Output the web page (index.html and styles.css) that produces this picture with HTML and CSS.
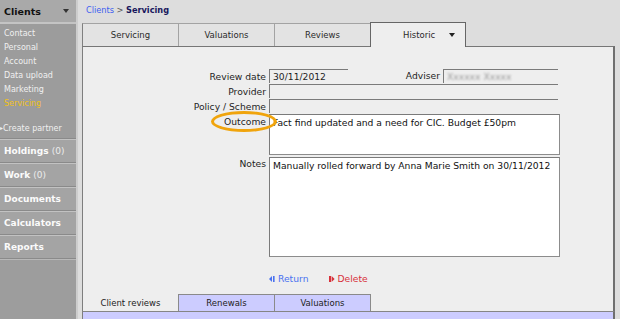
FILE: index.html
```html
<!DOCTYPE html>
<html lang="en">
<head>
    <meta charset="UTF-8">
    <title>Servicing - Historic</title>
    <link rel="stylesheet" href="styles.css">
</head>
<body>
    <div class="app">
        <aside class="sidebar">
            <div class="side-head">
                <span>Clients</span>
                <span class="caret"></span>
            </div>
            <ul class="side-sub">
                <li>Contact</li>
                <li>Personal</li>
                <li>Account</li>
                <li>Data upload</li>
                <li>Marketing</li>
                <li class="current">Servicing</li>
                <li class="side-action"><span class="bullet">&#9656;</span>Create partner</li>
            </ul>
            <div class="side-item">Holdings <span class="count">(0)</span></div>
            <div class="side-item">Work <span class="count">(0)</span></div>
            <div class="side-item">Documents</div>
            <div class="side-item">Calculators</div>
            <div class="side-item">Reports</div>
            <div class="side-rest"></div>
        </aside>

        <main class="content">
            <div class="crumbs">
                <a href="#" class="crumb-link">Clients</a> &gt; <b class="crumb-here">Servicing</b>
            </div>

            <div class="tabs">
                <div class="tab">Servicing</div>
                <div class="tab">Valuations</div>
                <div class="tab">Reviews</div>
                <div class="tab active">Historic <span class="caret dark"></span></div>
            </div>

            <section class="panel">
                <div class="form">
                    <div class="row">
                        <div class="label">Review date</div>
                        <div class="field-group">
                            <div class="field date">30/11/2012</div>
                            <div class="label inline">Adviser</div>
                            <div class="field adviser"><span class="blurred">Xxxxxx Xxxxx</span></div>
                        </div>
                    </div>
                    <div class="row">
                        <div class="label">Provider</div>
                        <div class="field wide"></div>
                    </div>
                    <div class="row">
                        <div class="label">Policy / Scheme</div>
                        <div class="field wide"></div>
                    </div>
                    <div class="row">
                        <div class="label marked">Outcome<span class="ring"></span></div>
                        <textarea class="area short" readonly>Fact find updated and a need for CIC. Budget £50pm</textarea>
                    </div>
                    <div class="row">
                        <div class="label">Notes</div>
                        <textarea class="area tall" readonly>Manually rolled forward by Anna Marie Smith on 30/11/2012</textarea>
                    </div>
                </div>

                <div class="actions">
                    <a href="#" class="action return">
                        <svg width="6" height="8" viewBox="0 0 6 8"><polygon points="0,4 3,1 3,7" fill="currentColor"/><rect x="4" y="1" width="1.6" height="6" fill="currentColor"/></svg>
                        Return
                    </a>
                    <a href="#" class="action delete">
                        <svg width="6" height="8" viewBox="0 0 6 8"><rect x="0" y="1" width="2" height="6" fill="currentColor"/><polygon points="2.6,1 5.6,4 2.6,7" fill="currentColor"/></svg>
                        Delete
                    </a>
                </div>

                <div class="subtabs">
                    <div class="subtab current">Client reviews</div>
                    <div class="subtab">Renewals</div>
                    <div class="subtab">Valuations</div>
                </div>
            </section>
            <div class="strip"></div>
        </main>
    </div>
</body>
</html>
```

FILE: styles.css
```css
/* Base */
html, body {
    margin: 0;
    height: 100%;
}

body {
    font-family: "DejaVu Sans", Verdana, sans-serif;
    font-size: 9px;
    color: #1e1e1e;
    background: #dddddd;
    overflow: hidden;
}

.app {
    display: flex;
    height: 319px;
}

/* Sidebar */
.sidebar {
    width: 76px;
    border-right: 2px solid #cdcdcd;
    background: #9c9c9c;
    display: flex;
    flex-direction: column;
}

.side-head {
    height: 22px;
    background: #a9a9a9;
    border-bottom: 2px solid #c4c4c4;
    display: flex;
    align-items: center;
    justify-content: space-between;
    padding: 0 7px 0 4px;
    font-weight: bold;
    font-size: 9.5px;
    color: #111;
}

.caret {
    width: 0;
    height: 0;
    border-left: 3px solid transparent;
    border-right: 3px solid transparent;
    border-top: 4px solid #333;
}

.caret.dark {
    border-top-color: #222;
    margin-left: 14px;
}

.side-sub {
    list-style: none;
    margin: 0;
    padding: 3px 0 0 0;
    font-size: 8px;
    color: #f0f0f0;
    border-bottom: 1px solid #8a8a8a;
}

.side-sub li {
    line-height: 14px;
    padding-left: 4px;
}

.side-sub .current {
    color: #f2c21b;
}

.side-sub .side-action {
    margin-top: 10px;
    padding-left: 0;
    height: 17px;
}

.bullet {
    font-size: 6px;
    vertical-align: 1px;
}

.side-item {
    height: 22px;
    line-height: 22px;
    padding-left: 4px;
    background: #a4a4a4;
    border-top: 1px solid #c2c2c2;
    border-bottom: 1px solid #8a8a8a;
    font-weight: bold;
    color: #fbfbfb;
}

.side-item .count {
    font-weight: normal;
    color: #ececec;
}

.side-rest {
    flex: 1;
    border-top: 1px solid #b8b8b8;
    background: #9d9d9d;
}

/* Content */
.content {
    flex: 1;
    display: flex;
    flex-direction: column;
    padding: 0 5px 0 4px;
}

.crumbs {
    height: 22px;
    line-height: 21px;
    padding-left: 4px;
    font-size: 8.2px;
    color: #555;
}

.crumb-link {
    color: #3d5ef0;
    text-decoration: none;
}

.crumb-here {
    color: #17175c;
}

/* Top tabs */
.tabs {
    display: flex;
    align-items: flex-end;
    height: 24px;
}

.tab {
    width: 97px;
    height: 23px;
    box-sizing: border-box;
    border: 1px solid #a3a3a3;
    border-bottom: none;
    background: #e3e3e3;
    margin-left: -1px;
    display: flex;
    align-items: center;
    justify-content: center;
    font-size: 8.5px;
    color: #2a2a2a;
}

.tab:first-child {
    margin-left: 0;
    border-left-color: #808080;
}

.tab.active {
    width: 96px;
    height: 25px;
    margin-bottom: -1px;
    border-color: #666;
    background: #eeeeee;
    justify-content: flex-start;
    padding-left: 32px;
    position: relative;
    z-index: 1;
}

/* Panel */
.panel {
    flex: 1;
    display: flex;
    flex-direction: column;
    background: #eeeeee;
    border-top: 1px solid #767676;
    border-left: 1px solid #7e7e7e;
    border-right: 2px solid #6f6f6f;
}

.form {
    margin: 22px 0 0 63px;
}

.row {
    display: flex;
    gap: 3px;
    margin-bottom: 1px;
}

.label {
    width: 120px;
    text-align: right;
    line-height: 13px;
    padding-top: 1px;
    white-space: nowrap;
    font-size: 9.2px;
}

.label.inline {
    width: auto;
    flex: 1;
    padding: 0 3px 0 0;
}

.marked {
    position: relative;
}

.ring {
    position: absolute;
    left: 65px;
    top: -3px;
    width: 66px;
    height: 21px;
    box-sizing: border-box;
    border: 3px solid #f0a40c;
    border-radius: 50%;
    z-index: 2;
}

.field-group {
    display: flex;
    width: 289px;
}

.field {
    height: 14px;
    box-sizing: border-box;
    border-top: 1px solid #7a7a7a;
    border-left: 1px solid #7a7a7a;
    padding-left: 3px;
    line-height: 13px;
    white-space: nowrap;
    font-size: 9.2px;
}

.field.date {
    width: 79px;
}

.field.adviser {
    width: 115px;
}

.field.wide {
    width: 289px;
}

.blurred {
    color: #9a9a9a;
    filter: blur(1.2px);
}

.area {
    width: 291px;
    box-sizing: border-box;
    border: 1px solid #8c8c8c;
    border-top-color: #7a7a7a;
    border-left-color: #7a7a7a;
    background: #fff;
    padding: 2px 3px;
    margin: 0;
    font-family: "DejaVu Sans", Verdana, sans-serif;
    font-size: 9.2px;
    line-height: 11px;
    color: #111;
    resize: none;
    overflow: hidden;
    outline: none;
}

.area.short {
    height: 41px;
}

.area.tall {
    height: 100px;
    margin-top: 1px;
}

/* Actions */
.actions {
    display: flex;
    gap: 20px;
    margin: 15px 0 0 186px;
    line-height: 12px;
    font-size: 9.2px;
}

.action {
    display: flex;
    align-items: center;
    gap: 3px;
    text-decoration: none;
}

.action.return {
    color: #4a72f0;
}

.action.delete {
    color: #d8313a;
}

/* Bottom tabs */
.subtabs {
    margin-top: auto;
    display: flex;
    height: 17px;
}

.subtab {
    width: 97px;
    box-sizing: border-box;
    border: 1px solid #8a8a8a;
    border-bottom: none;
    background: #ccccff;
    margin-left: -1px;
    display: flex;
    align-items: center;
    justify-content: center;
    font-size: 8.5px;
    color: #222;
}

.subtab.current {
    width: 95px;
    margin-left: 0;
    border: none;
    background: #eeeeee;
}

.subtab.current + .subtab {
    margin-left: 0;
}

.strip {
    height: 7px;
    background: #ccccff;
    border-top: 1px solid #858585;
    border-left: 1px solid #7e7e7e;
    border-right: 2px solid #6f6f6f;
}
```
